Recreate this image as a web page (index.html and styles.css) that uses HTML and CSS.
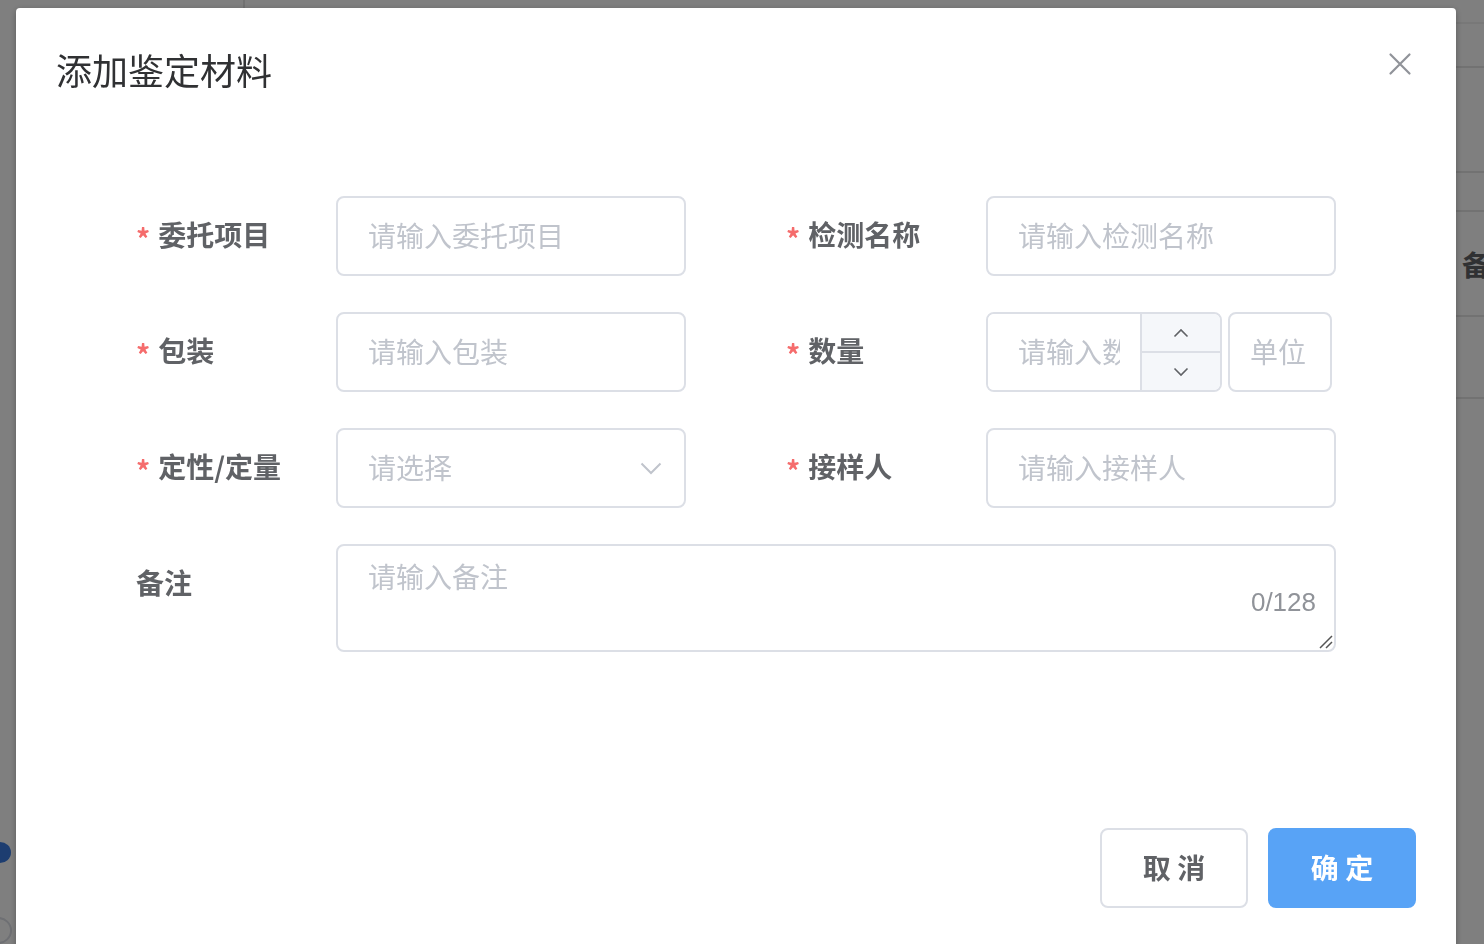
FILE: index.html
```html
<!DOCTYPE html>
<html lang="zh-CN">
<head>
<meta charset="utf-8">
<title>添加鉴定材料</title>
<link rel="stylesheet" href="styles.css">
</head>
<body>
<div class="page">
  <aside class="side">
    <span class="dot-blue"></span>
    <span class="dot-ring"></span>
  </aside>
  <section class="main">
    <div class="bar bar1"></div>
    <div class="bar bar2"></div>
    <div class="bar bar3"></div>
    <div class="bar bar4"></div>
    <div class="bar thead"><span>备注</span></div>
    <div class="bar bar6"></div>
  </section>
</div>

<div class="mask">
  <div class="dialog">
    <div class="dialog-header">
      <h2 class="dialog-title">添加鉴定材料</h2>
      <button class="close" type="button" aria-label="关闭">
        <svg width="32" height="32" viewBox="0 0 32 32"><path d="M6.5 6.5 L25.5 25.5 M25.5 6.5 L6.5 25.5" stroke="#909399" stroke-width="2.2" fill="none" stroke-linecap="round"/></svg>
      </button>
    </div>

    <div class="dialog-body">
      <form class="form">
        <div class="item">
          <label class="label req">委托项目</label>
          <div class="control"><input class="input" placeholder="请输入委托项目"></div>
        </div>
        <div class="item">
          <label class="label req">检测名称</label>
          <div class="control"><input class="input" placeholder="请输入检测名称"></div>
        </div>

        <div class="item">
          <label class="label req">包装</label>
          <div class="control"><input class="input" placeholder="请输入包装"></div>
        </div>
        <div class="item">
          <label class="label req">数量</label>
          <div class="control qty">
            <div class="num">
              <input class="num-input" placeholder="请输入数量">
              <div class="num-ctrl">
                <span class="num-btn up">
                  <svg width="16" height="10" viewBox="0 0 16 10"><polyline points="1.5,8.5 8,2 14.5,8.5" fill="none" stroke="#606266" stroke-width="1.6"/></svg>
                </span>
                <span class="num-btn down">
                  <svg width="16" height="10" viewBox="0 0 16 10"><polyline points="1.5,1.5 8,8 14.5,1.5" fill="none" stroke="#606266" stroke-width="1.6"/></svg>
                </span>
              </div>
            </div>
            <input class="input unit" placeholder="单位">
          </div>
        </div>

        <div class="item">
          <label class="label req">定性/定量</label>
          <div class="control">
            <div class="select">
              <input class="select-input" placeholder="请选择" readonly>
              <span class="select-arrow">
                <svg width="22" height="13" viewBox="0 0 22 13"><polyline points="1.5,1.5 11,11 20.5,1.5" fill="none" stroke="#c0c4cc" stroke-width="2"/></svg>
              </span>
            </div>
          </div>
        </div>
        <div class="item">
          <label class="label req">接样人</label>
          <div class="control"><input class="input" placeholder="请输入接样人"></div>
        </div>

        <div class="item wide">
          <label class="label">备注</label>
          <div class="control area-wrap">
            <textarea class="area" placeholder="请输入备注"></textarea>
            <span class="count">0/128</span>
            <svg class="grip" width="16" height="16" viewBox="0 0 16 16"><path d="M3 15 L15 3 M9 15 L15 9" stroke="#555" stroke-width="1.5" fill="none"/></svg>
          </div>
        </div>
      </form>
    </div>

    <div class="dialog-footer">
      <button class="btn" type="button">取 消</button>
      <button class="btn primary" type="button">确 定</button>
    </div>
  </div>
</div>
</body>
</html>
```

FILE: styles.css
```css
* { box-sizing: border-box; }

html, body {
  margin: 0;
  padding: 0;
}

body {
  width: 1484px;
  height: 944px;
  overflow: hidden;
  background: #ffffff;
  font-family: "Noto Sans CJK SC", "Helvetica Neue", "Liberation Sans", sans-serif;
  position: relative;
}

/* background page */
.page {
  display: flex;
  height: 944px;
}

.side {
  width: 245px;
  flex: none;
  border-right: 2px solid #e4e4e4;
  display: flex;
  flex-direction: column;
  padding-top: 842px;
}

.dot-blue {
  width: 22px;
  height: 22px;
  border-radius: 50%;
  background: #3a7be0;
  margin-left: -11px;
}

.dot-ring {
  width: 28px;
  height: 28px;
  border-radius: 50%;
  border: 2px solid #dcdfe6;
  margin-left: -16px;
  margin-top: 54px;
}

.main {
  flex: 1;
  display: flex;
  flex-direction: column;
}

.bar { border-bottom: 2px solid #e4e4e4; }
.bar1 { height: 24px; border-bottom-color: #f0f0f0; }
.bar2 { height: 44px; }
.bar3 { height: 105px; }
.bar4 { height: 39px; }
.thead {
  height: 105px;
  display: flex;
  align-items: center;
  padding-left: 1217px;
  white-space: nowrap;
  overflow: hidden;
}
.thead span {
  font-size: 28px;
  font-weight: 700;
  color: #606266;
}
.bar6 { height: 82px; }

/* modal */
.mask {
  position: fixed;
  inset: 0;
  background: rgba(0, 0, 0, 0.5);
  padding: 8px 0 0 16px;
}

.dialog {
  width: 1440px;
  background: #ffffff;
  border-radius: 4px;
  box-shadow: 0 2px 6px rgba(0, 0, 0, 0.3);
}

.dialog-header {
  position: relative;
  padding: 37px 40px 23px;
}

.dialog-title {
  margin: 0;
  font-size: 36px;
  line-height: 48px;
  font-weight: 400;
  color: #303133;
}

.close {
  position: absolute;
  top: 40px;
  right: 40px;
  width: 32px;
  height: 32px;
  padding: 0;
  border: none;
  background: transparent;
  display: flex;
}

.dialog-body {
  padding: 80px 120px 156px;
}

.form {
  display: grid;
  grid-template-columns: 550px 550px;
  column-gap: 100px;
  row-gap: 36px;
  margin: 0;
}

.item {
  display: flex;
  align-items: flex-start;
}

.item.wide { grid-column: 1 / span 2; }

.label {
  width: 200px;
  flex: none;
  padding-right: 24px;
  padding-bottom: 4px;
  font-size: 28px;
  line-height: 76px;
  font-weight: 700;
  color: #606266;
  white-space: nowrap;
}

.label.req::before {
  content: "*";
  display: inline-block;
  transform: translateY(4px);
  color: #f56c6c;
  margin-right: 8px;
}

.control {
  flex: 1;
  min-width: 0;
}

.input,
.num-input,
.select-input,
.area {
  font-family: inherit;
  font-size: 28px;
  color: #606266;
  outline: none;
}

.input::placeholder,
.num-input::placeholder,
.select-input::placeholder,
.area::placeholder {
  color: #c0c4cc;
  opacity: 1;
}

.input {
  display: block;
  width: 100%;
  height: 80px;
  border: 2px solid #dcdfe6;
  border-radius: 8px;
  padding: 0 30px 2px;
  background: #ffffff;
}

/* quantity */
.qty {
  display: flex;
  gap: 6px;
}

.num {
  width: 236px;
  height: 80px;
  flex: none;
  display: flex;
  border: 2px solid #dcdfe6;
  border-radius: 8px;
  overflow: hidden;
}

.num-input {
  flex: 1;
  min-width: 0;
  border: none;
  padding: 0 20px 2px 30px;
  background: #ffffff;
}

.num-ctrl {
  width: 80px;
  flex: none;
  display: flex;
  flex-direction: column;
  border-left: 2px solid #dcdfe6;
  background: #f5f7fa;
}

.num-btn {
  flex: 1;
  display: flex;
  align-items: center;
  justify-content: center;
}

.num-btn.up { border-bottom: 2px solid #dcdfe6; }

.input.unit {
  width: 104px;
  flex: none;
  padding: 0 20px 2px;
}

/* select */
.select {
  display: flex;
  align-items: center;
  height: 80px;
  border: 2px solid #dcdfe6;
  border-radius: 8px;
  background: #ffffff;
}

.select-input {
  flex: 1;
  min-width: 0;
  height: 100%;
  border: none;
  padding: 0 0 2px 30px;
  background: transparent;
  cursor: pointer;
}

.select-arrow {
  width: 50px;
  margin-right: 8px;
  display: flex;
  justify-content: center;
}

/* textarea */
.area-wrap { position: relative; }

.area {
  display: block;
  width: 100%;
  height: 108px;
  border: 2px solid #dcdfe6;
  border-radius: 8px;
  padding: 9px 30px 10px;
  line-height: 1.5;
  resize: none;
  background: #ffffff;
}

.count {
  position: absolute;
  right: 20px;
  bottom: 37px;
  font-family: "Helvetica Neue", "Liberation Sans", sans-serif;
  font-size: 26px;
  line-height: 26px;
  color: #909399;
}

.grip {
  position: absolute;
  right: 3px;
  bottom: 3px;
}

/* footer */
.dialog-footer {
  display: flex;
  justify-content: flex-end;
  gap: 20px;
  padding: 20px 40px 40px;
}

.btn {
  width: 148px;
  height: 80px;
  border: 2px solid #dcdfe6;
  border-radius: 8px;
  background: #ffffff;
  font-family: inherit;
  font-size: 28px;
  font-weight: 700;
  color: #606266;
  padding: 0 0 3px;
}

.btn.primary {
  background: #58a3f6;
  border-color: #58a3f6;
  color: #ffffff;
}
```
